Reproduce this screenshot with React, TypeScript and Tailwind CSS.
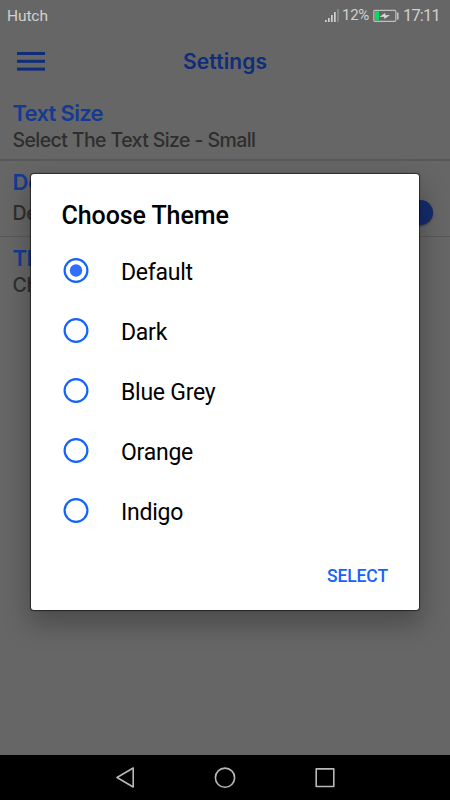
import React from "react";

const options = ["Default", "Dark", "Blue Grey", "Orange", "Indigo"];

function StatusBar() {
  return (
    <header className="flex h-8 shrink-0 items-center pl-[7px] pr-[9px] text-[#d0d0d0]">
      <span className="text-[15.5px] leading-8 tracking-[-0.1px]">Hutch</span>
      <svg className="ml-auto h-4 w-[15px]" viewBox="0 0 15 16" fill="#d0d0d0">
        <rect x="0" y="12" width="1.7" height="2" />
        <rect x="3" y="10" width="1.7" height="4" />
        <rect x="6" y="7" width="1.7" height="7" />
        <rect x="9" y="4" width="1.7" height="10" />
        <rect x="12" y="1" width="2" height="13" fill="#858585" />
      </svg>
      <span className="ml-[2px] -mt-[2px] w-[28px] whitespace-nowrap text-[15px] leading-[30px] tracking-[-0.3px]">12%</span>
      <svg className="ml-[3px] h-[14px] w-[26px]" viewBox="0 0 26 14">
        <rect x="0.8" y="1.3" width="22" height="11" rx="1" fill="none" stroke="#c0c0c0" strokeWidth="1.2" />
        <rect x="2" y="2.3" width="4" height="9" fill="#00df5c" />
        <path d="M6.5 8 L12 4 L12.5 6.3 L17 6 L11.5 10 L11 7.8 Z" fill="#d8d8d8" />
        <rect x="24" y="3.5" width="1.6" height="7" fill="#c0c0c0" />
      </svg>
      <span className="ml-[4px] w-[38px] whitespace-nowrap text-[16.5px] leading-8 tracking-[-0.85px]">17:11</span>
    </header>
  );
}

function Radio({ checked }: { checked: boolean }) {
  return (
    <svg className="h-[26px] w-[26px]" viewBox="0 0 26 26">
      <circle cx="13" cy="12.5" r="11.4" fill="none" stroke="#1463fa" strokeWidth="2.2" />
      {checked && <circle cx="13" cy="12.5" r="6.2" fill="#316efb" />}
    </svg>
  );
}

function Dialog() {
  return (
    <section
      role="dialog"
      className="absolute left-[31px] top-[174px] flex h-[436px] w-[388px] flex-col rounded-[3px] bg-white pl-[30px] pr-[31px] text-black shadow-[0_0_1px_1px_rgba(0,0,0,0.55),0_12px_26px_3px_rgba(0,0,0,0.26)]"
    >
      <h2 className="mt-[25px] h-8 pl-[0.5px] pt-px text-[25px] font-medium leading-8 tracking-[-0.08px]">Choose Theme</h2>
      <ul className="mt-[10px]">
        {options.map((name, i) => (
          <li key={name} className="flex h-[60px] items-center pl-[2px]">
            <Radio checked={i === 0} />
            <span className="ml-[32px] mt-[3px] text-[23px] leading-8 tracking-[-0.25px]">{name}</span>
          </li>
        ))}
      </ul>
      <button className="ml-auto mt-[23px] h-6 text-[17.5px] font-medium leading-6 tracking-[-0.1px] text-[#1463fa]">SELECT</button>
    </section>
  );
}

export default function App() {
  return (
    <div className="relative flex h-[800px] w-[450px] flex-col overflow-hidden bg-[#666666] font-[Roboto,sans-serif]">
      <StatusBar />
      <nav className="flex h-[60px] shrink-0 items-center pl-[17px] text-[#0f2d78]">
        <svg className="h-5 w-7" viewBox="0 0 28 20" fill="#0f2d78">
          <rect y="0" width="28" height="3" />
          <rect y="7.8" width="28" height="3" />
          <rect y="15.6" width="28" height="3" />
        </svg>
        <h1 className="ml-[138px] whitespace-nowrap font-[Inter,sans-serif] text-[21px] font-semibold tracking-[0.1px]">Settings</h1>
      </nav>
      <main className="flex grow flex-col font-[Inter,sans-serif]">
        <section className="h-[69px] border-b-2 border-[#595959] pl-[12.5px]">
          <h2 className="pt-[8px] text-[22px] font-semibold leading-[27px] tracking-[-0.7px] text-[#143a94]">Text Size</h2>
          <p className="text-[19.5px] font-medium leading-[27px] tracking-[-0.6px] text-[#2e2e2e]">Select The Text Size - Small</p>
        </section>
        <section className="flex h-[76px] justify-between border-b border-[#595959] pl-[12.5px] pr-[17px]">
          <div>
            <h2 className="pt-[8px] text-[22px] font-semibold leading-[27px] tracking-[-0.5px] text-[#143a94]">Demo Mode</h2>
            <p className="mt-[4px] text-[19.5px] font-medium leading-[27px] tracking-[-0.4px] text-[#2e2e2e]">De</p>
          </div>
          <div className="mt-[39px] size-[25px] rounded-full bg-[#142c6c] shadow-[0_1px_2px_rgba(0,0,0,0.4)]" />
        </section>
        <section className="pl-[12.5px]">
          <h2 className="pt-[8px] text-[22px] font-semibold leading-[27px] tracking-[-0.5px] text-[#143a94]">Th</h2>
          <p className="text-[19.5px] font-medium leading-[27px] tracking-[-0.4px] text-[#2e2e2e]">Ch</p>
        </section>
      </main>
      <footer className="flex h-[45px] shrink-0 items-center justify-center gap-[76px] bg-black">
        <svg className="size-6" viewBox="0 0 24 24" fill="none" stroke="#b8b8b8" strokeWidth="1.6" strokeLinejoin="round">
          <path d="M4 11.5 L20.2 2 V21 Z" />
        </svg>
        <svg className="size-6" viewBox="0 0 24 24" fill="none" stroke="#b8b8b8" strokeWidth="1.6">
          <circle cx="12" cy="11.7" r="9.6" />
        </svg>
        <svg className="size-6" viewBox="0 0 24 24" fill="none" stroke="#b8b8b8" strokeWidth="1.6" strokeLinejoin="round">
          <rect x="3.2" y="2.9" width="17.6" height="17.6" />
        </svg>
      </footer>
      <Dialog />
    </div>
  );
}
